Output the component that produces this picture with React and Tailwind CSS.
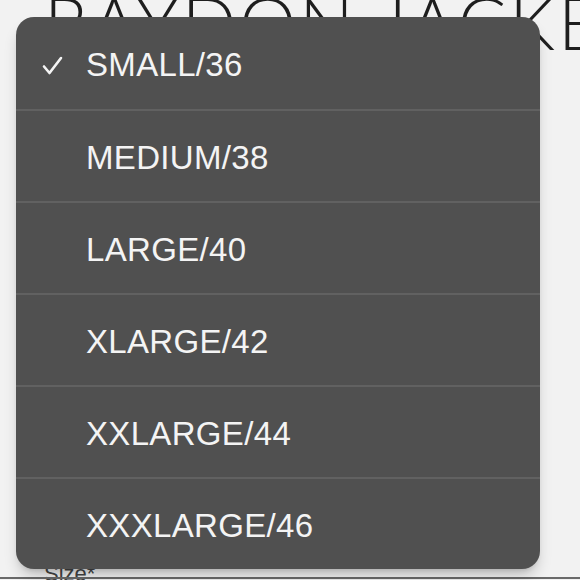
const sizes = ['SMALL/36', 'MEDIUM/38', 'LARGE/40', 'XLARGE/42', 'XXLARGE/44', 'XXXLARGE/46']

function CheckMark() {
  return (
    <svg width="21" height="19" viewBox="0 0 21 19" fill="none" stroke="currentColor" strokeWidth="2.6" strokeLinecap="round" strokeLinejoin="round">
      <path d="M2 10.5 L7.5 17 L19 2" />
    </svg>
  )
}

export default function App() {
  const selected = 'SMALL/36'

  return (
    <div className="relative w-[580px] h-[580px] overflow-hidden bg-[#f2f2f2]">
      <div className="flex flex-col h-full">
        <h1
          className="-mt-[14px] pl-[44px] whitespace-nowrap text-[#1e1e1e] text-[72px] leading-none font-light tracking-[0.04em]"
          style={{ fontFamily: 'Lato, sans-serif' }}
        >
          RAYDON JACKET
        </h1>
        <div className="flex-1" />
        <p
          className="pl-[44px] text-[#444] text-[22px] leading-none -mb-[8px]"
          style={{ fontFamily: '"Liberation Sans", Arial, sans-serif' }}
        >
          Size*
        </p>
        <div className="h-[2px] bg-[#6a6a6a] mb-[1px]" />
      </div>

      <ul
        className="absolute left-[16px] top-[17px] w-[524px] bg-[#505050] rounded-[18px] overflow-hidden shadow-lg shadow-black/20"
        style={{ fontFamily: '"Liberation Sans", Arial, sans-serif' }}
      >
        {sizes.map((s, i) => (
          <li
            key={s}
            className={`flex items-center h-[92px] pt-[4px] text-[#f4f4f4] text-[33px] tracking-[0.01em] ${i > 0 ? 'border-t-2 border-[#616161]' : ''}`}
          >
            <span className="w-[70px] flex pl-[26px]">
              {s === selected && <CheckMark />}
            </span>
            <span>{s}</span>
          </li>
        ))}
      </ul>
    </div>
  )
}
